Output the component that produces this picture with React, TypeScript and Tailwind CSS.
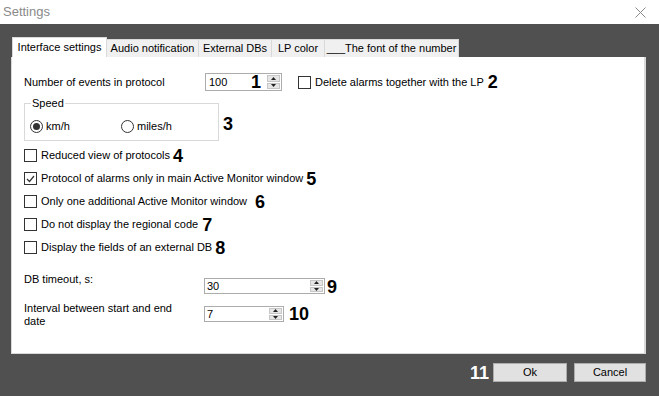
import React from "react";

const font = { fontFamily: '"Liberation Sans", Arial, sans-serif' };

function Num({ n, className = "" }: { n: string; className?: string }) {
  return <span className={`text-[18px] font-bold leading-none text-black ${className}`}>{n}</span>;
}

function Spinner() {
  return (
    <div className="flex h-full w-[15px] flex-col gap-px p-px">
      <div className="flex flex-1 items-center justify-center border border-[#c6c6c6] bg-[#e6e6e6]">
        <svg width="5" height="3" viewBox="0 0 5 3"><path d="M0 3 L2.5 0 L5 3 Z" fill="#222" /></svg>
      </div>
      <div className="flex flex-1 items-center justify-center border border-[#c6c6c6] bg-[#e6e6e6]">
        <svg width="5" height="3" viewBox="0 0 5 3"><path d="M0 0 L2.5 3 L5 0 Z" fill="#222" /></svg>
      </div>
    </div>
  );
}

function CheckBox({ checked = false }: { checked?: boolean }) {
  return (
    <span className="flex h-[13px] w-[13px] shrink-0 items-center justify-center border border-[#333] bg-white">
      {checked && (
        <svg width="9" height="8" viewBox="0 0 9 8">
          <path d="M1 4 L3.5 6.5 L8 1" fill="none" stroke="#333" strokeWidth="1.2" />
        </svg>
      )}
    </span>
  );
}

function Radio({ checked = false }: { checked?: boolean }) {
  return (
    <span className="flex h-[13px] w-[13px] shrink-0 items-center justify-center rounded-full border border-[#333] bg-white">
      {checked && <span className="h-[7px] w-[7px] rounded-full bg-[#333]" />}
    </span>
  );
}

const checks = [
  { label: "Reduced view of protocols", n: "4", gap: "ml-[3px]", checked: false },
  { label: "Protocol of alarms only in main Active Monitor window", n: "5", gap: "ml-[3px]", checked: true },
  { label: "Only one additional Active Monitor window", n: "6", gap: "ml-[8px]", checked: false },
  { label: "Do not display the regional code", n: "7", gap: "ml-[4px]", checked: false },
  { label: "Display the fields of an external DB", n: "8", gap: "ml-[3px]", checked: false },
];

const tabs = [
  { label: "Interface settings", w: "w-[95px]" },
  { label: "Audio notification", w: "w-[92px]" },
  { label: "External DBs", w: "w-[73px]" },
  { label: "LP color", w: "w-[53px]" },
  { label: "___The font of the number", w: "w-[134px]" },
];

export default function App() {
  return (
    <div style={font} className="flex h-[396px] w-[659px] flex-col bg-[#505050] text-[11px] text-black">
      <div className="flex h-[24px] shrink-0 items-center justify-between bg-white pl-[3px] pr-[13px]">
        <span className="text-[13px] text-[#8a8a8a]">Settings</span>
        <svg width="11" height="11" viewBox="0 0 11 11">
          <path d="M0.5 0.5 L10.5 10.5 M10.5 0.5 L0.5 10.5" stroke="#8a8a8a" strokeWidth="1" />
        </svg>
      </div>

      <div className="flex flex-col pl-[11px] pt-[13px]">
        <div className="flex h-[20px] items-end pl-px">
          {tabs.map((t, i) => (
            <div
              key={t.label}
              className={
                i === 0
                  ? `flex h-[20px] ${t.w} items-center justify-center whitespace-nowrap border border-b-0 border-[#d9d9d9] bg-white`
                  : `flex h-[18px] ${t.w} items-center justify-center whitespace-nowrap border border-b-0 border-l-0 border-[#d9d9d9] bg-[#f0f0f0]`
              }
            >
              {t.label}
            </div>
          ))}
        </div>

        <div className="flex h-[297px] w-[635px] flex-col border border-t-0 border-r-2 border-[#d9d9d9] bg-white pl-[12px]">
          <div className="mt-[16px] flex h-[18px] items-center">
            <span className="w-[181px]">Number of events in protocol</span>
            <div className="flex h-[18px] w-[77px] items-center border border-[#acacac] pl-[3px]">
              <span className="flex-1">100</span>
              <Num n="1" className="mr-[5px]" />
              <Spinner />
            </div>
            <span className="ml-[16px]"><CheckBox /></span>
            <span className="ml-[4px]">Delete alarms together with the LP</span>
            <Num n="2" className="ml-[4px]" />
          </div>

          <div className="mt-[6px] flex items-center">
            <fieldset className="h-[44px] w-[195px] border border-[#d9d9d9] pl-[5px]">
              <legend className="ml-[1px] px-px leading-[12px]">Speed</legend>
              <div className="mt-[9px] flex items-center">
                <Radio checked />
                <span className="ml-[3px] w-[75px]">km/h</span>
                <Radio />
                <span className="ml-[3px]">miles/h</span>
              </div>
            </fieldset>
            <Num n="3" className="ml-[4px] mt-[9px]" />
          </div>

          <div className="mt-[3px] flex flex-col">
            {checks.map((c) => (
              <div key={c.n} className="flex h-[23px] items-center">
                <CheckBox checked={c.checked} />
                <span className="ml-[4px]">{c.label}</span>
                <Num n={c.n} className={c.gap} />
              </div>
            ))}
          </div>

          <div className="mt-[14px] flex items-start">
            <span className="w-[180px] leading-[13px]">DB timeout, s:</span>
            <div className="mt-[5px] flex h-[16px] w-[121px] items-center border border-[#acacac] pl-[2px]">
              <span className="flex-1">30</span>
              <Spinner />
            </div>
            <Num n="9" className="ml-[2px] mt-[5px]" />
          </div>

          <div className="mt-[6px] flex items-start">
            <span className="w-[165px] leading-[13px]">Interval between start and end date</span>
            <div className="ml-[15px] mt-[4px] flex h-[16px] w-[80px] items-center border border-[#acacac] pl-[2px]">
              <span className="flex-1">7</span>
              <Spinner />
            </div>
            <Num n="10" className="ml-[5px] mt-[3px]" />
          </div>
        </div>
      </div>

      <div className="mt-[9px] flex items-center justify-end pr-[13px]">
        <span className="mr-[4px] text-[18px] font-bold leading-none text-white">11</span>
        <button className="h-[19px] w-[74px] border border-[#adadad] bg-[#e1e1e1] text-[11px]">Ok</button>
        <button className="ml-[7px] h-[19px] w-[72px] border border-[#adadad] bg-[#e1e1e1] text-[11px]">Cancel</button>
      </div>
    </div>
  );
}
